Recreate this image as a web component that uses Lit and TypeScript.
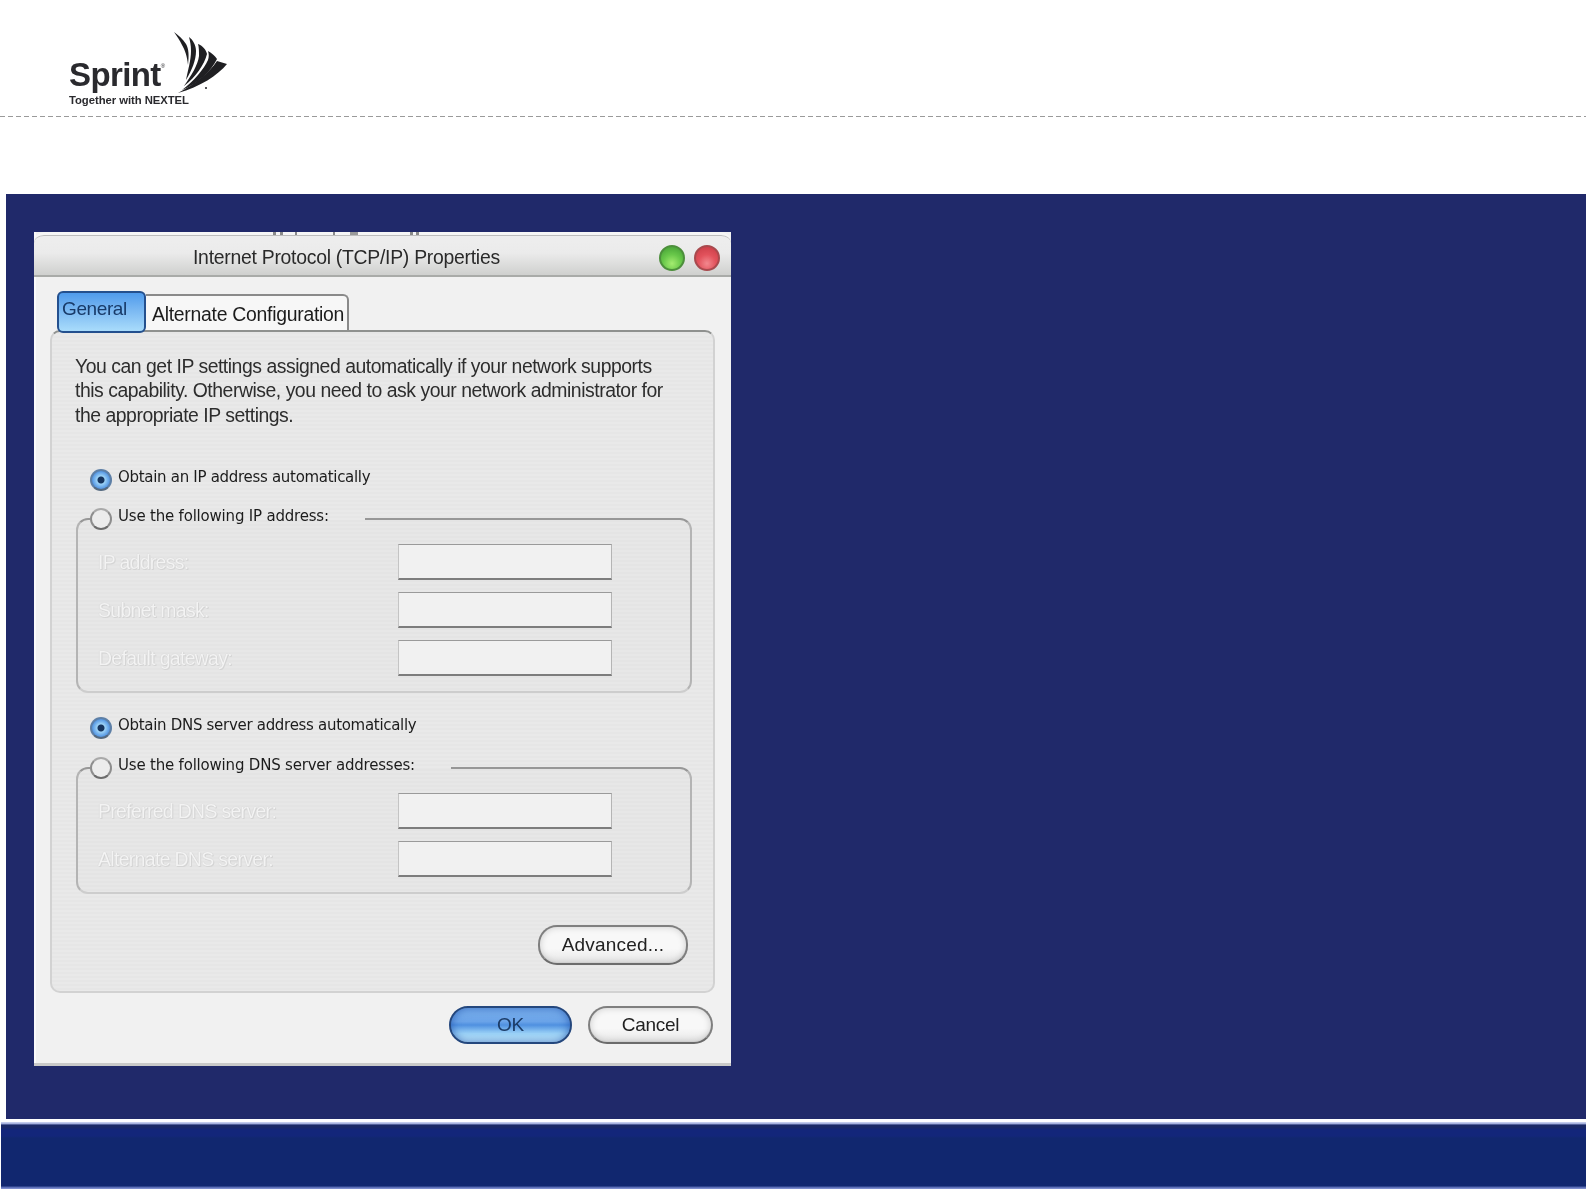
import { LitElement, html, css } from "lit";
import { customElement } from "lit/decorators.js";

@customElement("app-root")
export class AppRoot extends LitElement {
  static styles = css`
    :host { display: block; width: 1586px; height: 1189px; background: #fff; overflow: hidden; font-family: "Liberation Sans", Arial, sans-serif; }
    .header { height: 116px; box-sizing: border-box; padding: 32px 0 0 69px; display: flex; align-items: flex-start; }
    .wordmark { display: flex; flex-direction: column; width: 104px; padding-top: 24px; color: #2a2a2e; filter: blur(0.3px); }
    .sprint { font-size: 33px; line-height: 38px; font-weight: 700; letter-spacing: -0.6px; white-space: nowrap; }
    .sprint sup { font-size: 6px; font-weight: 400; vertical-align: 18px; line-height: 0; }
    .together { font-size: 11.3px; line-height: 12px; font-weight: 700; white-space: nowrap; letter-spacing: -0.05px; }
    .swoosh { width: 56px; height: 64px; display: block; filter: blur(0.3px); }
    .dash { height: 1px; background: repeating-linear-gradient(90deg, #9a9a9a 0 5px, transparent 5px 8px); }
    .spacer { height: 77px; }
    .stage { margin-left: 6px; height: 925px; box-sizing: border-box; padding: 38px 0 0 28px; background: #20296a; }
    .footbar { margin: 3px 0 0 1px; height: 67px; background: linear-gradient(180deg, #c3ccec 0, #c3ccec 1px, #8d9ad0 2px, #1b2a66 3px, #1b2a66 5px, #13267a 8px, #13267a 14px, #11276f 16px, #11276f 64px, #4f62ad 65px, #8c9ad6 67px); }

    .dialog { width: 697px; height: 834px; display: flex; flex-direction: column; background: #f1f1f1; box-shadow: inset 0 -3px 0 #c9c9c9, inset 2px 0 0 #fafafa; filter: blur(0.4px); position: relative; }
    .ticks { position: absolute; z-index: 2; left: 239px; top: 0; width: 146px; height: 3px; background: linear-gradient(90deg, #8a8a8a 0 3px, transparent 3px 7px, #8a8a8a 7px 10px, transparent 10px 22px, #8a8a8a 22px 24px, transparent 24px 60px, #8a8a8a 60px 62px, transparent 62px 77px, #9a9a9a 77px 85px, transparent 85px 137px, #8a8a8a 137px 140px, transparent 140px 143px, #8a8a8a 143px 146px); }
    .titlebar { height: 45px; box-sizing: border-box; border-top: 3px solid #f6f6f6; border-radius: 10px 10px 0 0; box-shadow: inset 0 1px 0 #bdbdbd; border-bottom: 2px solid #a9aba8; background: linear-gradient(180deg, #eeeeee 0%, #ebebeb 45%, #cfd0ce 100%); display: flex; align-items: center; position: relative; }
    .title { position: absolute; left: 159px; top: 9px; font-size: 19.4px; line-height: 26px; color: #2a2a2a; white-space: nowrap; letter-spacing: -0.27px; }
    .lights { margin: 5px 11px 0 auto; display: flex; gap: 9px; }
    .light { width: 26px; height: 26px; border-radius: 50%; box-sizing: border-box; }
    .green { border: 2px solid #4d8f3c; background: radial-gradient(circle at 50% 75%, #a4ec70 0, #69c84a 45%, #3f9a33 100%); }
    .red { border: 2px solid #a84a4e; background: radial-gradient(circle at 50% 75%, #f2888e 0, #e2525c 45%, #c63a44 100%); }

    .tabs { height: 39px; margin: 14px 0 0 23px; display: flex; align-items: flex-start; position: relative; z-index: 1; }
    .tab { box-sizing: border-box; white-space: nowrap; }
    .tab.active { width: 89px; height: 42px; border: 2px solid #24508e; border-radius: 6px; background: linear-gradient(180deg, #4f9bec 0%, #7ab8f2 45%, #a9dcfb 100%); color: #183a68; font-size: 19px; line-height: 31px; padding-left: 3px; letter-spacing: -0.4px; }
    .tab.other { margin-top: 3px; width: 203px; height: 36px; border: 2px solid #8a8a8a; border-bottom: none; border-left: none; border-radius: 0 6px 0 0; background: #f7f7f7; color: #1c1c1c; font-size: 19.4px; line-height: 37px; padding-left: 6px; letter-spacing: -0.27px; }

    .panel { margin: 0 16px; height: 663px; box-sizing: border-box; border: 2px solid #d2d2d2; border-top-color: #8f918f; border-radius: 10px; padding: 22px 25px 0 23px; background: repeating-linear-gradient(180deg, #e6e6e6 0 2px, #e9e9e9 2px 4px); display: flex; flex-direction: column; align-items: flex-start; }
    .intro { margin: 0; font-size: 19.4px; line-height: 24.3px; color: #2d2d2d; white-space: nowrap; letter-spacing: -0.47px; }

    .opt { display: flex; align-items: center; font-family: "DejaVu Sans", sans-serif; font-size: 15px; letter-spacing: -0.3px; color: #1c1c1c; white-space: nowrap; }
    .opt .txt { padding-bottom: 5px; margin-left: 6px; }
    .opt.solo { height: 22px; margin-left: 15px; }
    .opt.first { margin-top: 42px; }
    .opt.second { margin-top: 24px; }
    .radio { width: 22px; height: 22px; border-radius: 50%; box-sizing: border-box; flex: none; }
    .radio.on { border: 2px solid #5d7fa6; border-bottom-color: #556a80; background: radial-gradient(circle at 50% 50%, #16345e 0, #16345e 3px, #9cd2f6 4px, #5f9fe6 8px, #3b78c8 11px); }
    .radio.off { border: 2px solid #8d8d8d; border-top-color: #a9a9a9; border-bottom-color: #6c6c6c; background: #ececec; }

    fieldset { margin: 16px 0 0 1px; padding: 13px 0 15px 0; width: 616px; box-sizing: border-box; border: 2px solid #b4b4b4; border-top-color: #979797; border-bottom-color: #cdcdcd; border-radius: 12px; min-width: 0; background: repeating-linear-gradient(180deg, #e4e4e4 0 2px, #e7e7e7 2px 4px); display: grid; grid-template-columns: 320px 214px; row-gap: 12px; }
    fieldset.g2 { margin-top: 17px; }
    legend { margin-left: 12px; padding: 0 36px 0 0; height: 24px; }
    .legend-row { display: flex; align-items: center; height: 24px; font-family: "DejaVu Sans", sans-serif; font-size: 15px; letter-spacing: -0.2px; color: #1c1c1c; white-space: nowrap; }
    .legend-row .txt { padding-bottom: 5px; margin-left: 6px; }
    .lbl { padding-left: 20px; font-size: 19.4px; line-height: 36px; letter-spacing: -0.65px; color: #f3f3f3; text-shadow: 0 0 1px #c4c4c4, 1px 1px 0 #d6d6d6; white-space: nowrap; }
    .box { height: 36px; box-sizing: border-box; background: #f1f1f1; border-top: 1px solid #9a9a9a; border-bottom: 2px solid #7d7d7d; border-left: 1px solid #c4c4c4; border-right: 1px solid #b4b4b4; }

    .pill { box-sizing: border-box; height: 38px; border-radius: 19px; font-size: 19px; line-height: 34px; text-align: center; color: #222; border: 2px solid #7f7f7f; border-bottom-color: #6b6b6b; background: linear-gradient(180deg, #f8f8f8 0%, #f8f8f8 60%, #e6e6e6 100%); box-shadow: inset 0 -1px 0 #cfcfcf, inset 0 0 7px rgba(0, 0, 0, 0.18); letter-spacing: -0.3px; }
    .pill.advanced { width: 150px; margin: 31px 0 0 463px; height: 40px; line-height: 36px; letter-spacing: 0.2px; }
    .pill.cancel { width: 125px; }
    .pill.ok { width: 123px; border-color: #24477d; color: #1c3c66; background: linear-gradient(180deg, #7bb1ee 0%, #6aa3e8 40%, #4f90e0 50%, #9bd2f7 75%, #c6ecfd 100%); box-shadow: inset 0 0 8px rgba(30, 80, 170, 0.75); }
    .actions { display: flex; gap: 16px; justify-content: flex-end; margin: 13px 18px 0 0; }
  `;

  render() {
    return html`
      <div class="header">
        <div class="wordmark">
          <div class="sprint">Sprint<sup>®</sup></div>
          <div class="together">Together with NEXTEL</div>
        </div>
        <svg class="swoosh" viewBox="0 0 56 64" aria-hidden="true">
          <g fill="#1f1f22">
            <path d="M1 0 C5 3 10 7 13 12 C16 17 16 24 15 33 C14 24 12 18 9 13 C7 9 4 4 1 0 Z" />
            <path d="M16 5 C20 8 23 13 23 19 C23 28 19 38 13 48 C15 38 18 28 18 19 C18 13 17 9 16 5 Z" />
            <path d="M25 12 C30 14 33 18 34 22 C31 33 23 45 11 54 C18 44 25 33 26 24 C26 20 26 15 25 12 Z" />
            <path d="M35 19 C39 21 42 24 44 27 C38 39 26 51 9 58 C21 49 31 37 35 28 C36 25 36 22 35 19 Z" />
            <path d="M44 29 L54 32 C45 43 27 55 5 61 C22 52 36 41 44 29 Z" />
            <circle cx="33" cy="56" r="1" />
          </g>
        </svg>
      </div>
      <div class="dash"></div>
      <div class="spacer"></div>
      <div class="stage">
        <div class="dialog">
          <div class="ticks"></div>
          <div class="titlebar">
            <div class="title">Internet Protocol (TCP/IP) Properties</div>
            <div class="lights"><div class="light green"></div><div class="light red"></div></div>
          </div>
          <div class="tabs">
            <div class="tab active">General</div>
            <div class="tab other">Alternate Configuration</div>
          </div>
          <div class="panel">
            <p class="intro">You can get IP settings assigned automatically if your network supports<br />this capability. Otherwise, you need to ask your network administrator for<br />the appropriate IP settings.</p>
            <div class="opt solo first"><span class="radio on"></span><span class="txt">Obtain an IP address automatically</span></div>
            <fieldset>
              <legend><div class="legend-row"><span class="radio off"></span><span class="txt">Use the following IP address:</span></div></legend>
              <div class="lbl">IP address:</div><div class="box"></div>
              <div class="lbl">Subnet mask:</div><div class="box"></div>
              <div class="lbl">Default gateway:</div><div class="box"></div>
            </fieldset>
            <div class="opt solo second"><span class="radio on"></span><span class="txt">Obtain DNS server address automatically</span></div>
            <fieldset class="g2">
              <legend><div class="legend-row"><span class="radio off"></span><span class="txt">Use the following DNS server addresses:</span></div></legend>
              <div class="lbl">Preferred DNS server:</div><div class="box"></div>
              <div class="lbl">Alternate DNS server:</div><div class="box"></div>
            </fieldset>
            <div class="pill advanced">Advanced...</div>
          </div>
          <div class="actions">
            <div class="pill ok">OK</div>
            <div class="pill cancel">Cancel</div>
          </div>
        </div>
      </div>
      <div class="footbar"></div>
    `;
  }
}
